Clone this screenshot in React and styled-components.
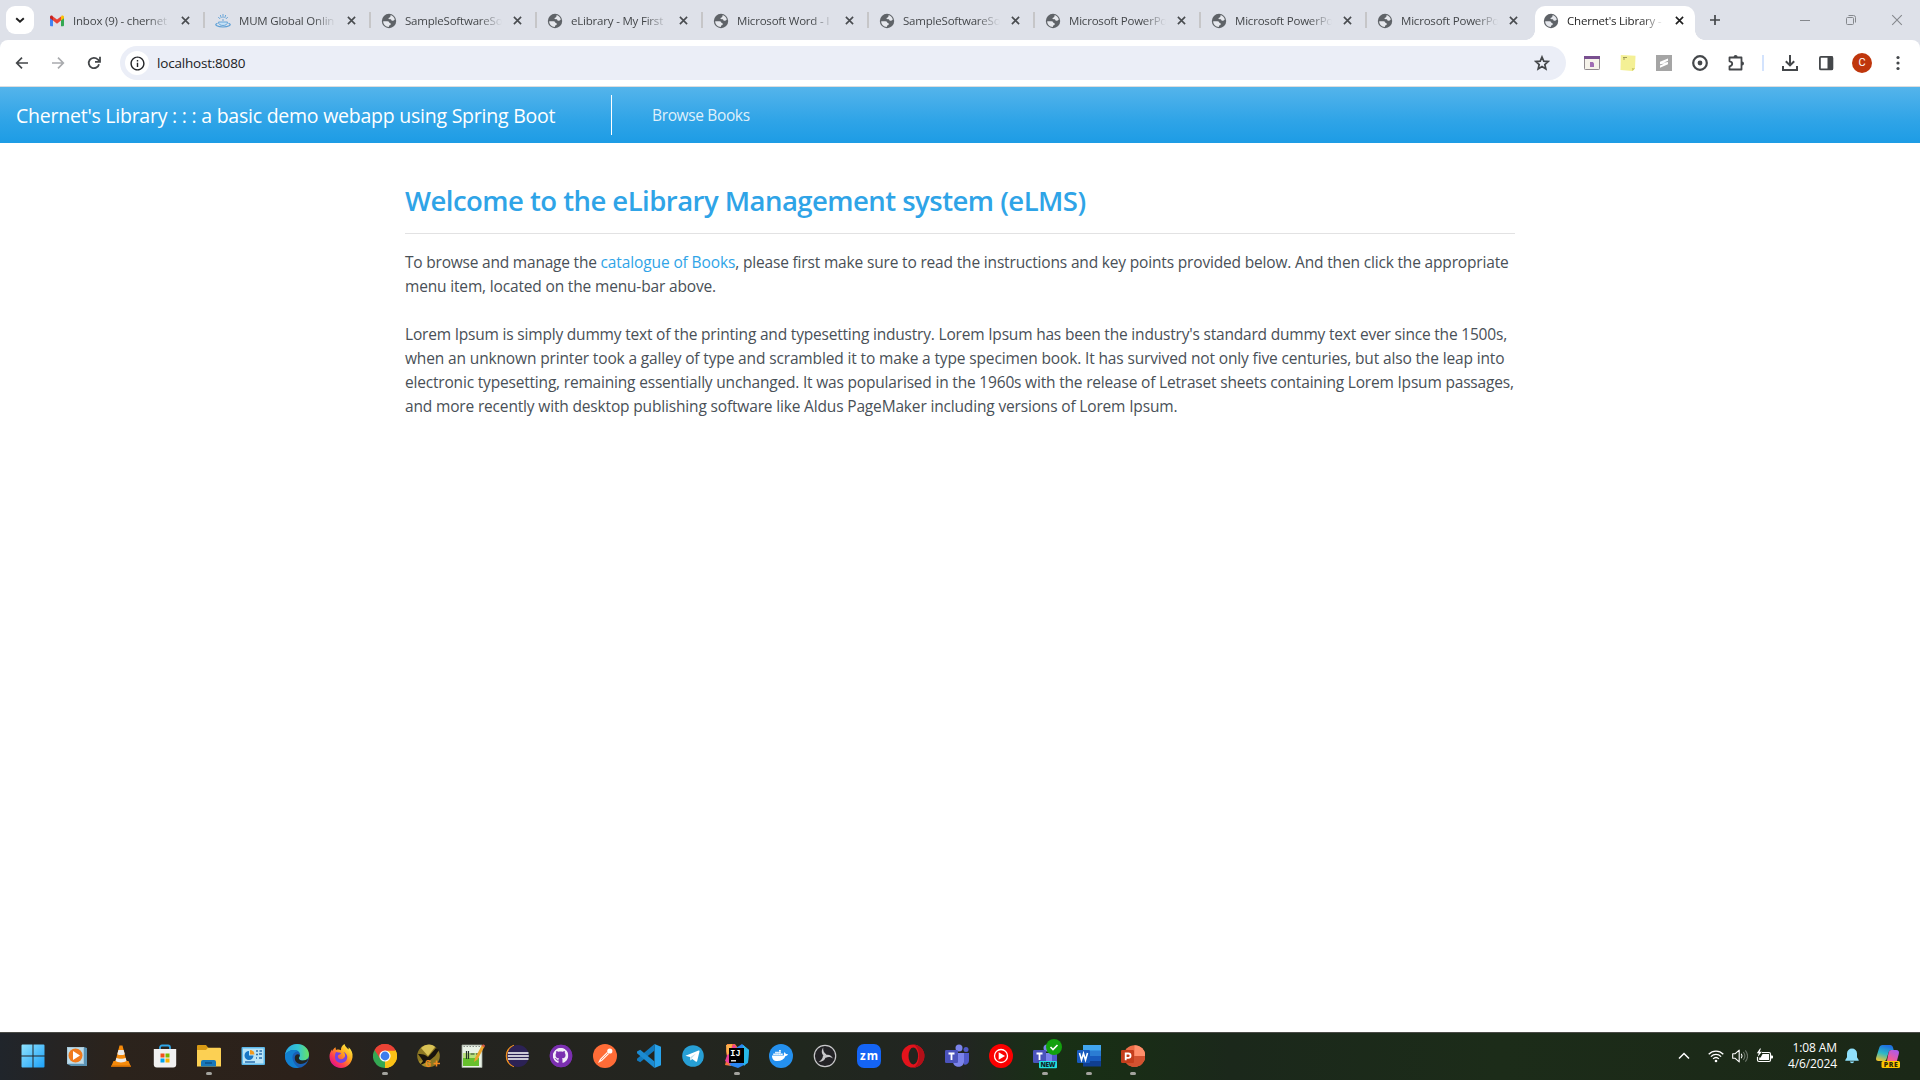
import React from 'react';
import styled, { createGlobalStyle, css } from 'styled-components';
import { MdInfoOutline } from 'react-icons/md';
import { FaGithub, FaDocker } from 'react-icons/fa';

const GlobalStyle = createGlobalStyle`
  * { box-sizing: border-box; }
  body { margin: 0; background: #fff; font-family: "Open Sans", "Noto Sans", sans-serif; }
  svg { display: block; flex: none; }
`;

const Screen = styled.div`
  width: 1920px;
  height: 1080px;
  display: flex;
  flex-direction: column;
  overflow: hidden;
`;

/* ---------- browser tabs ---------- */
const TabStrip = styled.div`
  height: 40px;
  flex: none;
  display: flex;
  background: #dee1e9;
`;
const TabSearch = styled.button`
  width: 28px;
  height: 28px;
  margin: 6px 4px 6px 6px;
  padding: 0;
  border: 0;
  border-radius: 9px;
  background: #fff;
  display: flex;
  align-items: center;
  justify-content: center;
`;
const Tab = styled.div`
  width: 166px;
  height: 40px;
  padding: 1px 0 0 11px;
  display: flex;
  align-items: center;
  position: relative;
  color: #44474a;
  ${p => p.$divided && css`
    &::after {
      content: '';
      position: absolute;
      right: -1px;
      top: 12px;
      width: 2px;
      height: 16px;
      background: #c6c6c8;
    }
  `}
  ${p => p.$active && css`
    width: 160px;
    height: 34px;
    margin: 6px 0 0 3px;
    padding: 0 0 5px 8px;
    background: #fff;
    border-radius: 10px 10px 0 0;
    color: #1f1f1f;
    &::before, &::after {
      content: '';
      position: absolute;
      bottom: 0;
      width: 10px;
      height: 10px;
    }
    &::before {
      left: -10px;
      background: radial-gradient(circle at 0 0, transparent 9.6px, #fff 10.2px);
    }
    &::after {
      right: -10px;
      background: radial-gradient(circle at 100% 0, transparent 9.6px, #fff 10.2px);
    }
  `}
`;
const Favicon = styled.span`
  width: 16px;
  height: 16px;
  margin-right: 8px;
  display: flex;
  align-items: center;
  justify-content: center;
  color: #5f6368;
`;
const TabTitle = styled.span`
  width: 97px;
  overflow: hidden;
  white-space: nowrap;
  font-size: 11.5px;
  line-height: 18px;
  letter-spacing: -0.2px;
  mask-image: linear-gradient(90deg, #000 74px, transparent 97px);
`;
const TabClose = styled.span`
  margin-left: 10.5px;
  color: ${p => (p.$active ? '#1f1f1f' : '#494c50')};
`;
const NewTab = styled.span`
  margin: 14px 0 0 14px;
  color: #44474a;
`;
const WindowButtons = styled.div`
  margin-left: auto;
  height: 40px;
  display: flex;
  align-items: center;
  color: #85888d;
`;
const WindowButton = styled.span`
  width: 46px;
  display: flex;
  justify-content: center;
`;

/* ---------- browser toolbar ---------- */
const ToolbarBack = styled.div`
  flex: none;
  background: #dee1e9;
`;
const Toolbar = styled.div`
  height: 47px;
  display: flex;
  align-items: center;
  padding: 0 4px;
  background: #fff;
  border-bottom: 1px solid #dcdddf;
  border-radius: 8px 8px 0 0;
`;
const ToolButton = styled.span`
  width: 36px;
  height: 36px;
  display: flex;
  align-items: center;
  justify-content: center;
  color: ${p => (p.$muted ? '#a9abae' : '#44474a')};
`;
const AddressBar = styled.div`
  width: 1446px;
  height: 34px;
  margin: 0 8px 0 8px;
  padding: 0 16px 0 5px;
  display: flex;
  align-items: center;
  border-radius: 17px;
  background: #ebeef7;
`;
const SiteInfo = styled.span`
  width: 24px;
  height: 24px;
  border-radius: 50%;
  background: #fff;
  display: flex;
  align-items: center;
  justify-content: center;
  color: #222427;
`;
const Url = styled.span`
  margin-left: 8px;
  flex: 1;
  font-size: 13.5px;
  letter-spacing: -0.2px;
  color: #202124;
`;
const ToolDivider = styled.span`
  width: 2px;
  height: 16px;
  margin: 0 8px;
  background: #d3e3fd;
`;
const Avatar = styled.span`
  width: 20px;
  height: 20px;
  border-radius: 50%;
  background: #bf360c;
  color: #fff;
  font: 11px/20px Roboto, sans-serif;
  text-align: center;
`;

/* ---------- web page ---------- */
const NavBar = styled.header`
  height: 56px;
  flex: none;
  padding-left: 16px;
  display: flex;
  align-items: center;
  background: linear-gradient(#54b4eb, #2fa4e7 60%, #1d9ce5);
  color: #fff;
`;
const Brand = styled.a`
  width: 595px;
  font-size: 19.5px;
  letter-spacing: -0.235px;
  white-space: nowrap;
`;
const NavDivider = styled.span`
  width: 1px;
  height: 40px;
  background: #fff;
`;
const NavLink = styled.a`
  margin-left: 40px;
  font-size: 15.5px;
  letter-spacing: -0.36px;
  color: rgba(255, 255, 255, 0.85);
`;
const Page = styled.main`
  flex: 1;
  padding: 41px 0 0 405px;
`;
const Content = styled.section`
  width: 1110px;
`;
const Heading = styled.h2`
  margin: 0;
  height: 34px;
  line-height: 34px;
  font-size: 27.5px;
  font-weight: 600;
  letter-spacing: -0.53px;
  color: #2fa4e7;
`;
const Rule = styled.hr`
  margin: 15px 0 16px;
  border: 0;
  height: 1px;
  background: #e2e2e3;
`;
const Paragraph = styled.p`
  margin: 0 0 24px;
  color: #495057;
  font-size: 15.5px;
  line-height: 24px;
`;
const Line = styled.span`
  display: block;
  white-space: pre;
  letter-spacing: ${p => p.$track}px;
`;
const Run = styled.span`
  letter-spacing: ${p => p.$track}px;
`;
const BookLink = styled.a`
  color: #2fa4e7;
  letter-spacing: -0.12px;
`;

/* ---------- taskbar ---------- */
const Taskbar = styled.footer`
  height: 48px;
  flex: none;
  padding: 0 11px 1px;
  display: flex;
  align-items: center;
  border-top: 1px solid #4a4b47;
  background: linear-gradient(90deg, #20252b 0, #2b231c 110px, #2c211a 300px, #24231f 400px,
    #23251f 700px, #20271e 800px, #222522 960px, #183015 1050px, #192d16 1130px, #1b281b 1230px, #1c2c19 1500px, #1b2817 1920px);
`;
const AppSlot = styled.span`
  width: 44px;
  height: 46px;
  display: flex;
  align-items: center;
  justify-content: center;
  position: relative;
  ${p => p.$running && css`
    &::after {
      content: '';
      position: absolute;
      bottom: 4px;
      left: 19px;
      width: 6px;
      height: 3px;
      border-radius: 2px;
      background: #a3a39e;
    }
  `}
`;
const Tray = styled.div`
  margin-left: auto;
  display: flex;
  align-items: center;
  color: #fff;
`;
const TraySlot = styled.span`
  width: ${p => p.$w}px;
  display: flex;
  justify-content: center;
`;
const Clock = styled.div`
  width: 61px;
  text-align: right;
  font-size: 12px;
  line-height: 16px;
  letter-spacing: -0.12px;
  white-space: nowrap;
`;

const Icon = ({ size = 24, box = 24, children, ...rest }) => (
  <svg width={size} height={size} viewBox={`0 0 ${box} ${box}`} fill="none" {...rest}>{children}</svg>
);

const GlobeIcon = () => (
  <Icon size={16} box={16}>
    <circle cx="8" cy="8" r="7.200" fill="#5f6368" />
    <path d="M9.600 2.100c2.200.6 3.800 2.300 4.200 4.500-.6.900-1.500 1.300-2.600 1.200-.9 0-1-.8-1.200-1.500-.8 0-1.900 0-2.400-.5-.5-.6.2-1.300 1-1.400.8-.2 1.100-1.200 1-2.300Z" fill="#e6e8ed" />
    <path d="M2.200 8.300h4.300c1.300 0 1.900.8 1.900 1.700 1.200 0 1.600.7 1.300 1.500-.3.700-1.500.7-1.700 1.400l-.2 1C5 14 2.100 11.600 2.200 8.300Z" fill="#e6e8ed" />
  </Icon>
);
const GmailIcon = () => (
  <Icon size={16} box={16}>
    <path d="M1 4v8.200a1 1 0 0 0 1 1h2V6.8Z" fill="#4285f4" />
    <path d="M15 4v8.200a1 1 0 0 1-1 1h-2V6.8Z" fill="#34a853" />
    <path d="M12 4.2V7.6L15 5.2V4c0-1.5-1.6-1.9-2.6-1.2Z" fill="#fbbc04" />
    <path d="M4 7.6V3.6L8 6.6l4-3v4l-4 3.1Z" fill="#ea4335" />
    <path d="M1 4v1.2l3 2.4V3.6l-.6-.8C2.400 2.100 1 2.600 1 4Z" fill="#c5221f" />
  </Icon>
);
const SakaiIcon = () => (
  <Icon size={16} box={16} stroke="#5c9fd6">
    <path d="M3.500 9c0 2.500 2 3.500 4.500 3.500s4.500-1 4.500-3.500Z" fill="#c4e0f6" strokeWidth=".9" />
    <path d="M2.500 10.300C.5 11 .3 12 1.800 12.800c3 1.600 9.400 1.600 12.400 0 1.500-.8 1.300-1.800-.7-2.500" strokeWidth="1.200" />
    <path d="M8 1v4M5.300 2l1 3M10.700 2l-1 3M3.200 4l2 2M12.800 4l-2 2M7 7h2" strokeWidth=".9" />
  </Icon>
);
const Cross = ({ size = 9, w = 1.8 }) => (
  <Icon size={size} box={10} stroke="currentColor" strokeWidth={w}><path d="m1 1 8 8M9 1 1 9" /></Icon>
);

/* ---------- application icons ---------- */
const Windows = () => (
  <Icon>
    <defs><linearGradient id="win" x1="0" y1="0" x2="1" y2="1"><stop stopColor="#8fe3ff" /><stop offset="1" stopColor="#1ca0f7" /></linearGradient></defs>
    <path fill="url(#win)" d="M.5 1.500a1 1 0 0 1 1-1h10v11H.5ZM12.500.5h10a1 1 0 0 1 1 1v10h-11ZM.5 12.500h11v11h-10a1 1 0 0 1-1-1ZM12.500 12.500h11v10a1 1 0 0 1-1 1h-10Z" />
  </Icon>
);
const MediaPlayer = () => (
  <Icon>
    <path d="M2 3h17v17H2Z" fill="#a9c9da" /><path d="m19 3 3 1v18l-3-2ZM2 20h17l3 2H6Z" fill="#5a93b5" />
    <path d="M3 4h15v15H3Z" fill="#bddcea" />
    <circle cx="10.500" cy="11.500" r="7" fill="#f07a1c" /><path d="m8 7 7 4.500L8 16Z" fill="#fff" />
  </Icon>
);
const Vlc = () => (
  <Icon>
    <path d="M4.500 17h15l2.500 6H2Z" fill="#f58a0b" /><path d="M2 21.500h20V23H2Z" fill="#c96a05" />
    <path d="M10.500 1.500h3L18 19c-2 2-10 2-12 0Z" fill="#f58a0b" />
    <path d="m9.400 6 5.300-.1 1.100 4.300c-2 1.200-5.500 1.200-7.500 0ZM7.400 13.700c2 1.400 7.200 1.400 9.200 0l.9 3.400c-2.500 1.700-8.500 1.700-11 0Z" fill="#ececec" />
  </Icon>
);
const Store = () => (
  <Icon>
    <path d="M7 6V3.500A2 2 0 0 1 9 1.500h6a2 2 0 0 1 2 2V6" stroke="#2fa6e9" strokeWidth="1.800" />
    <path d="M.8 5h22.400v15.500a3 3 0 0 1-3 3H3.800a3 3 0 0 1-3-3Z" fill="#f1f1f1" />
    <path d="M7.500 9.500h4v4h-4Z" fill="#f1511b" /><path d="M12.500 9.500h4v4h-4Z" fill="#80b900" />
    <path d="M7.500 14.500h4v4h-4Z" fill="#00a4ef" /><path d="M12.500 14.500h4v4h-4Z" fill="#fbb300" />
  </Icon>
);
const Explorer = () => (
  <Icon>
    <path d="M0 2a1 1 0 0 1 1-1h8l2.500 3H23v6H0Z" fill="#d99a14" />
    <path d="M0 6h9l2-2.200h12a1 1 0 0 1 1 1V22.500H0Z" fill="#fcd053" />
    <path d="M4 22.500V18a2 2 0 0 1 2-2h11a2 2 0 0 1 2 2v4.500Z" fill="#1878ba" /><path d="M8 19h7" stroke="#0c4f85" strokeWidth="1.500" />
  </Icon>
);
const ControlPanel = () => (
  <Icon>
    <rect x=".5" y="3" width="23.500" height="18" rx="1" fill="#5cb8ea" /><rect x="2" y="4.500" width="20.500" height="15" fill="#b9e4f8" />
    <path d="M8 7a4.500 4.500 0 1 0 4.500 4.500H8Z" fill="#1876c5" /><path d="M9 6v4.500h4.500A4.500 4.500 0 0 0 9 6Z" fill="#f29a1f" />
    <path d="M15 7h2M18.500 7H21M15 10.500h2M18 10h3M15 14h1M18 14h3M4 18h10" stroke="#2b6fae" strokeWidth="1.300" />
  </Icon>
);
const Edge = () => (
  <Icon>
    <defs><linearGradient id="edg" x1="0" y1=".3" x2="1" y2=".3"><stop stopColor="#2aa8e0" /><stop offset=".55" stopColor="#34c5d2" /><stop offset="1" stopColor="#69e35f" /></linearGradient></defs>
    <circle cx="12" cy="12" r="12" fill="#1a5fb4" />
    <path d="M0 11C.8 4.500 6 0 12 0c7 0 12 5 12 10.500 0 4-3 6-6 6-3.500 0-4.500-1.500-4-3 .5-1 1-1.500 1-3C15 8 12.500 6 9 6 5 6 1.500 8 0 11Z" fill="url(#edg)" />
    <path d="M0 11c1.500-3 5-5 9-5 1.500 0 3 .4 4 1.200C9 7.800 7 10.500 7.500 14c.6 4.500 3.500 8 6.500 9.800C6 25-.7 19 0 11Z" fill="#1280d0" />
    <path d="M14 13.500c-.5 1.500.5 3 4 3 2 0 3.500-.6 4.800-1.700L22.500 17c-2 2-4.500 3-7 3-4 0-6.500-4-5.500-7.500.7-2 3-3 4.700-1.500.2 1-.3 1.700-.7 2.500Z" fill="#222420" />
  </Icon>
);
const Firefox = () => (
  <Icon>
    <defs><linearGradient id="ffx" x1=".9" y1=".1" x2=".2" y2=".9"><stop stopColor="#fff044" /><stop offset=".4" stopColor="#ffa41c" /><stop offset=".75" stopColor="#ff3f4e" /><stop offset="1" stopColor="#e31587" /></linearGradient></defs>
    <path d="M15.500 0c.6 2.700 2.500 3.600 4 5.600.3-.8.2-1.600.1-2.400 3 2.600 4.400 6 3.900 10C22.700 19.500 17.800 24 12 24 5.500 24 .5 19 .5 12.600c0-3 1-5 2.600-7.300l.3 2C4 5.600 5 4 6.500 3.300L7 6c2-.8 3.500-.5 5 .2C11.800 3.500 13 1.500 15.500 0Z" fill="url(#ffx)" />
    <path d="M7 8c1.500.5 3 .2 4.500 1 1 .5.500 1-1 1.400-1.400.4-2 1.500-1.500 3 .8 2 4 2.600 6 .7 1.800-1.800 1.500-4-.5-6 3.500 1.300 5 5.300 2.700 8.500-2.500 3.400-8 3.200-10.200 0C5.600 14.500 5.500 10.500 7 8Z" fill="#7543e3" />
  </Icon>
);
const Chrome = () => (
  <Icon>
    <path d="M12 12 1.600 6A12 12 0 0 1 22.400 6Z" fill="#ea4335" />
    <path d="M12 12 22.400 6A12 12 0 0 1 12 24Z" fill="#fbc116" />
    <path d="M12 12v12A12 12 0 0 1 1.600 6Z" fill="#34a853" />
    <path d="M12 6.500h10.600A12 12 0 0 1 12 24l4.800-9.300Z" fill="#fbc116" /><path d="M1.600 6A12 12 0 0 1 22.600 6.500H12L7.200 14.700Z" fill="#ea4335" />
    <circle cx="12" cy="12" r="5.600" fill="#fff" /><circle cx="12" cy="12" r="4.400" fill="#3b7ded" />
  </Icon>
);
const Beekeeper = () => (
  <Icon>
    <circle cx="11.500" cy="12" r="11.300" fill="#8c7723" /><path d="M4 4C9-1 16 0 18 3l-7 9Z" fill="#d9c256" /><path d="M2 17c2 5 8 6 10 6l2-8Z" fill="#a8912f" />
    <path d="M1 10c3 0 5 0 7 1l3 2 8-9 3 2-4 6-6 5c-3 1-5 3-9 4l3-4-2-3Z" fill="#17130d" />
    <text x="8" y="23" fontSize="8.500" fontWeight="700" fontFamily="Roboto, sans-serif" fill="#f58a1f">G</text>
    <path d="M19.500 16.500v6M16.500 19.500h6.500" stroke="#f58a1f" strokeWidth="1.500" />
  </Icon>
);
const NotepadPlus = () => (
  <Icon>
    <path d="M1 1h20v22.500H1Z" fill="#e9f2e6" stroke="#9da39b" strokeWidth=".8" /><path d="M2 9h16v13H2Z" fill="#b9e07c" /><path d="M2 14h16v8H2Z" fill="#67bf2d" />
    <path d="M2.500 2.500h17" stroke="#8a918a" strokeDasharray="1.500 1.500" /><path d="M5.500 7v8M7.500 7v8M9.500 10h4M15 10h2" stroke="#26362a" strokeWidth="1.200" />
    <path d="m13 18 1-4 7-13 2.500 1.500-7 13Z" fill="#eda52c" /><path d="m20.500 1.800 2.800 1.700L24 1.200 22 .2Z" fill="#d25945" />
  </Icon>
);
const Eclipse = () => (
  <Icon>
    <path d="M9 1.200A11.400 11.400 0 0 0 9 22.800 13 13 0 0 1 9 1.200Z" fill="#f7941e" stroke="#f7941e" />
    <circle cx="13" cy="12" r="11" fill="#2c2255" /><path d="M3 9h20.500M2.800 12h21M3 15h20.500" stroke="#fff" strokeWidth="1.600" />
  </Icon>
);
const Github = () => (
  <Icon>
    <circle cx="12" cy="12" r="11.200" fill="#7b2fb0" />
    <FaGithub x="3.500" y="3.500" width="17" height="17" color="#f2edf7" />
    <circle cx="12" cy="12" r="9.800" stroke="#7b2fb0" strokeWidth="3" />
  </Icon>
);
const Postman = () => (
  <Icon>
    <circle cx="12" cy="12" r="12" fill="#ff6c37" />
    <path d="m5 19 2-4 7-7 2 2-7 7Z" fill="#fff" opacity=".92" /><circle cx="16.800" cy="7" r="2.600" fill="#fff" /><path d="m8 16 7-7" stroke="#ff6c37" strokeWidth=".7" />
  </Icon>
);
const VsCode = () => (
  <Icon>
    <path d="M17.500 0 24 2.800v18.400L17.500 24Z" fill="#27a3ec" />
    <path d="M17.500 0v6.500L3.200 18.200 0 16.500v-1.800Z" fill="#1279bd" /><path d="M17.500 24v-6.500L3.200 5.800 0 7.500v1.800Z" fill="#1b8bd2" />
  </Icon>
);
const Telegram = () => (
  <Icon>
    <circle cx="12" cy="12" r="10.800" fill="#279fd5" />
    <path d="m4.500 11.800 13-5.300c.8-.2 1.100.3 1 1L16.200 17c-.2.800-.8.900-1.500.5l-3.500-2.600-1.800 1.700-.4-3.500-3.800-1Z" fill="#fff" /><path d="m9.200 13.200 6-4-4.500 5-.5 2Z" fill="#c0dfed" />
  </Icon>
);
const IntelliJ = () => (
  <Icon>
    <path d="M2 0h8l3 4L6 22l-6-1 2-8-1-6Z" fill="#f7733b" /><path d="M9 0 3 9 0 17l6 4 8-12Z" fill="#ec3f9a" /><path d="m1 1 6-1-1 9-4 2Z" fill="#fcb14c" />
    <path d="m11 4 6-4 7 6-1 13-10 5-9-3 6-6Z" fill="#2a86f3" /><path d="m18 1 6 5-1 12-4 4-2-10Z" fill="#27b7e8" />
    <path d="M4 4h15v15H4Z" fill="#000" />
    <text x="5.300" y="12.200" fontSize="8.500" fontWeight="700" fontFamily="Liberation Mono, monospace" fill="#fff">IJ</text><path d="M6 16.800h5" stroke="#fff" strokeWidth="1.300" />
  </Icon>
);
const Docker = () => (
  <Icon><circle cx="12" cy="12" r="12" fill="#2490ee" /><FaDocker x="3" y="3.500" width="18" height="17" color="#fff" /></Icon>
);
const Obs = () => (
  <Icon>
    <circle cx="12" cy="12" r="10.700" fill="#232326" stroke="#c8c8ca" strokeWidth="1.200" />
    {[0, 120, 240].map(turn => (
      <path key={turn} transform={`rotate(${turn} 12 12)`} d="M12 12.600C8.800 11 7.600 7.500 10.200 3.600 9.900 7 11 9 13.600 10.600Z" fill="#c8c8ca" />
    ))}
  </Icon>
);
const Zoom = () => (
  <Icon><rect width="24" height="24" rx="7" fill="#1464f5" /><text x="12" y="15.800" textAnchor="middle" textLength="18" fontSize="11.500" fontWeight="700" fontFamily="Open Sans, sans-serif" fill="#fff">zm</text></Icon>
);
const Opera = () => (
  <Icon>
    <ellipse cx="12" cy="12" rx="11.300" ry="11.500" fill="#e3131c" /><path d="M12 .5A11.500 11.500 0 0 1 12 23.500c8-2 8-21 0-23Z" fill="#b30f18" />
    <ellipse cx="12.300" cy="12" rx="4.800" ry="8.500" fill="#22251f" />
  </Icon>
);
const TeamsShape = () => (
  <>
    <circle cx="14" cy="4" r="3.500" fill="#7b83eb" /><circle cx="21" cy="5.500" r="2.500" fill="#5059c9" />
    <path d="M17 9h7v7.500a4 4 0 0 1-5 4Z" fill="#5059c9" /><path d="M8 9h11v8.500c0 7-11 7-11 0Z" fill="#7b83eb" />
    <rect y="6" width="13" height="13" rx="1.200" fill="#4b53bc" /><path d="M3.500 9.500h6M6.500 9.500V16" stroke="#fff" strokeWidth="1.800" />
  </>
);
const Teams = () => <Icon><TeamsShape /></Icon>;
const YtMusic = () => (
  <Icon><circle cx="12" cy="12" r="12" fill="#fb0000" /><circle cx="12" cy="12" r="6.500" stroke="#fff" strokeWidth="1.300" /><path d="m9.700 8.300 6.300 3.700-6.300 3.700Z" fill="#fff" /></Icon>
);
const TeamsNew = () => (
  <Icon overflow="visible">
    <TeamsShape />
    <rect x="6" y="17" width="18" height="7.200" rx="1" fill="#21e0e0" />
    <text x="15" y="23" textAnchor="middle" textLength="15" fontSize="6.500" fontWeight="900" fontFamily="Open Sans, sans-serif" fill="#10272b">NEW</text>
    <circle cx="21" cy="3" r="8" fill="#13a10e" /><path d="m17.500 3 2.500 2.500 4.500-4.500" stroke="#fff" strokeWidth="1.600" />
  </Icon>
);
const Word = () => (
  <Icon>
    <path d="M6 1h18v6H6Z" fill="#41a5ee" /><path d="M6 6.500h18V12H6Z" fill="#2b7cd3" /><path d="M6 12h18v5.500H6Z" fill="#185abd" /><path d="M6 17h18v5.500H6Z" fill="#103f91" />
    <rect y="6" width="13" height="13" rx="1.200" fill="#185abd" />
    <path d="m2.500 9 2 7 2-6.500L8.500 16l2-7" stroke="#fff" strokeWidth="1.600" />
  </Icon>
);
const PowerPoint = () => (
  <Icon>
    <circle cx="13.500" cy="12" r="10.800" fill="#ed6c47" /><path d="M13.500 1.200A10.800 10.800 0 0 1 24.300 12H13.500Z" fill="#ff8f6b" /><path d="M2.700 12h21.600a10.800 10.800 0 0 1-21.600 0Z" fill="#d35230" />
    <rect y="6" width="13" height="13" rx="1.200" fill="#c43e1c" /><path d="M4.700 16.200V9.500h2.600c3 0 3 4.300 0 4.300H5" stroke="#fff" strokeWidth="1.800" />
  </Icon>
);

const TABS = [
  { title: 'Inbox (9) - chernet', icon: GmailIcon },
  { title: 'MUM Global Onlin', icon: SakaiIcon },
  { title: 'SampleSoftwareSo' },
  { title: 'eLibrary - My First' },
  { title: 'Microsoft Word - I' },
  { title: 'SampleSoftwareSo' },
  { title: 'Microsoft PowerPo' },
  { title: 'Microsoft PowerPo' },
  { title: 'Microsoft PowerPo' },
  { title: "Chernet's Library -", active: true },
];

const APPS = [
  [Windows], [MediaPlayer], [Vlc], [Store], [Explorer, true], [ControlPanel], [Edge], [Firefox],
  [Chrome, true], [Beekeeper], [NotepadPlus], [Eclipse], [Github], [Postman], [VsCode], [Telegram],
  [IntelliJ, true], [Docker], [Obs], [Zoom], [Opera], [Teams], [YtMusic], [TeamsNew, true], [Word, true], [PowerPoint, true],
];

function Tabs() {
  return (
    <TabStrip>
      <TabSearch><Icon size={10} box={10} stroke="#1f1f1f" strokeWidth="1.900"><path d="m1.200 3.200 3.800 3.600 3.800-3.600" /></Icon></TabSearch>
      {TABS.map((tab, i) => {
        const Mark = tab.icon || GlobeIcon;
        return (
          <Tab key={i} $active={tab.active} $divided={i < 8}>
            <Favicon><Mark /></Favicon>
            <TabTitle>{tab.title}</TabTitle>
            <TabClose $active={tab.active}><Cross /></TabClose>
          </Tab>
        );
      })}
      <NewTab><Icon size={12} box={12} stroke="currentColor" strokeWidth="1.700"><path d="M6 1v10M1 6h10" /></Icon></NewTab>
      <WindowButtons>
        <WindowButton><Icon size={10} box={10} stroke="currentColor"><path d="M0 5.500h10" /></Icon></WindowButton>
        <WindowButton><Icon size={10} box={10} stroke="currentColor"><rect x=".5" y="2.500" width="7" height="7" rx="1" /><path d="M2.500.5h5a2 2 0 0 1 2 2v5" /></Icon></WindowButton>
        <WindowButton><Cross size={12} w={0.9} /></WindowButton>
      </WindowButtons>
    </TabStrip>
  );
}

function BrowserToolbar() {
  return (
    <ToolbarBack>
      <Toolbar>
        <ToolButton><Icon size={14} box={14} stroke="currentColor" strokeWidth="1.700"><path d="M13 7H2M7 1.700 1.700 7 7 12.300" /></Icon></ToolButton>
        <ToolButton $muted><Icon size={14} box={14} stroke="currentColor" strokeWidth="1.700"><path d="M1 7h11M7 1.700 12.300 7 7 12.300" /></Icon></ToolButton>
        <ToolButton><Icon size={14} box={14} stroke="currentColor" strokeWidth="1.800"><path d="M12 8.200A5.200 5.200 0 1 1 10.800 3.500L12.500 5.200" /><path d="M13 .8v5H8" /></Icon></ToolButton>
        <AddressBar>
          <SiteInfo><MdInfoOutline size={17} /></SiteInfo>
          <Url>localhost:8080</Url>
          <Icon size={16} box={16} stroke="#44474a" strokeWidth="1.700"><path d="m8 2 1.750 4.150 4.450.4-3.400 2.950 1.050 4.400L8 11.550 4.150 13.900l1.050-4.400L1.800 6.550l4.450-.4Z" /></Icon>
        </AddressBar>
        <ToolButton>
          <Icon size={16} box={16}><rect x=".5" y="1.500" width="15" height="13" rx=".8" fill="#f6f3ea" stroke="#918a8e" /><path d="M0 1h16v3H0Z" fill="#794f90" /><path d="M6 7h2.800L10 8.300v3.700H6Z" fill="#a06db3" /></Icon>
        </ToolButton>
        <ToolButton>
          <Icon size={16} box={16}><path d="M.8 0 15.500.8 15 13.500 12.500 16 .5 15Z" fill="#f4f095" /><path d="m15 13.500-3.200-.5.7 3Z" fill="#cfc965" /><path d="M3 2.500h4M3 4h2" stroke="#a09c58" /></Icon>
        </ToolButton>
        <ToolButton>
          <Icon size={16} box={16}><path d="M0 0h16v16H0Z" fill="#a5a5a5" /><path d="m4 6.800 8-3.300v2.300L7.500 7.700 12 7v2.300L4 12.700v-2.300L8.500 8.500 4 9.200Z" fill="#fff" /></Icon>
        </ToolButton>
        <ToolButton>
          <Icon size={16} box={16}><circle cx="8" cy="8" r="6.800" stroke="currentColor" strokeWidth="2.200" /><circle cx="8" cy="8" r="2.400" fill="currentColor" /></Icon>
        </ToolButton>
        <ToolButton>
          <Icon size={18} box={18}>
            <path d="M2.500 3.500h12v12h-12v-3.200c2.200-.3 2.700-1.300 2.700-2.500s-.5-2.200-2.700-2.500Z" stroke="currentColor" strokeWidth="1.800" strokeLinejoin="round" />
            <path d="M6.600 3a2 2 0 0 1 4 0ZM15 7.500a2 2 0 0 1 0 4Z" fill="currentColor" />
          </Icon>
        </ToolButton>
        <ToolDivider />
        <ToolButton><Icon size={16} box={16} stroke="currentColor" strokeWidth="2"><path d="M8 0v10M3.800 6.200 8 10.400l4.200-4.200M1 11v4h14v-4" /></Icon></ToolButton>
        <ToolButton><Icon size={16} box={16}><rect x="1.900" y="1.900" width="12.500" height="12.500" rx="1" stroke="currentColor" strokeWidth="1.800" /><path d="M9.500 1.500H15v13H9.500Z" fill="currentColor" /></Icon></ToolButton>
        <ToolButton><Avatar>C</Avatar></ToolButton>
        <ToolButton><Icon size={16} box={16}><g fill="currentColor"><circle cx="8" cy="2.500" r="1.600" /><circle cx="8" cy="8" r="1.600" /><circle cx="8" cy="13.500" r="1.600" /></g></Icon></ToolButton>
      </Toolbar>
    </ToolbarBack>
  );
}

function SystemTray() {
  return (
    <Tray>
      <TraySlot $w={40}><Icon size={12} box={12} stroke="currentColor" strokeWidth="1.500"><path d="m1 8.500 5-5 5 5" /></Icon></TraySlot>
      <TraySlot $w={24}>
        <Icon size={16} box={16} stroke="currentColor" strokeWidth="1.300">
          <path d="M.7 6.200c4-4.200 10.600-4.200 14.600 0M2.900 8.600c2.900-2.900 7.300-2.900 10.200 0M5.100 10.900c1.700-1.600 4.100-1.600 5.800 0" /><circle cx="8" cy="13" r="1.300" fill="currentColor" stroke="none" />
        </Icon>
      </TraySlot>
      <TraySlot $w={24}>
        <Icon size={16} box={16} stroke="currentColor" strokeWidth="1.100">
          <path d="M.7 5.700h2.500l4-3.600v11.800l-4-3.600H.7Z" strokeLinejoin="round" /><path d="M9.300 5.700c1 1.500 1 3.100 0 4.600" /><path d="M11.300 4c2 2.500 2 5.500 0 8M13.300 2.300c2.800 3.500 2.800 7.900 0 11.400" opacity=".35" />
        </Icon>
      </TraySlot>
      <TraySlot $w={24}>
        <Icon size={17} box={17}>
          <path d="M6 4.500h7a1.500 1.500 0 0 1 1.500 1.500v6a1.500 1.500 0 0 1-1.500 1.500H3A1.500 1.500 0 0 1 1.500 12V9" stroke="#fff" strokeWidth="1.200" />
          <path d="M6.500 6h6.500v6H3.200V9.500h1.500Z" fill="#fff" /><path d="M15 7.500h1.200a.8.800 0 0 1 .8.800v1.400a.8.800 0 0 1-.8.800H15ZM4 .5.8 5.300h2L1.500 9 6 3.800H3.600L5 .5Z" fill="#fff" />
        </Icon>
      </TraySlot>
      <Clock>1:08 AM<br />4/6/2024</Clock>
      <TraySlot $w={30}>
        <Icon size={16} box={16}><path d="M8 .5a5 5 0 0 0-5 5v3.800L1.300 12v.7h13.400V12L13 9.300V5.500a5 5 0 0 0-5-5ZM5.800 13.600a2.300 2.300 0 0 0 4.400 0Z" fill="#8fe0fb" /></Icon>
      </TraySlot>
      <TraySlot $w={42}>
        <Icon>
          <defs>
            <linearGradient id="cpa" x1=".5" y1="0" x2=".2" y2="1"><stop stopColor="#1f6fe0" /><stop offset=".5" stopColor="#2cb8c8" /><stop offset="1" stopColor="#f2c52c" /></linearGradient>
            <linearGradient id="cpb" x1=".8" y1="0" x2=".3" y2="1"><stop stopColor="#a75bf0" /><stop offset=".6" stopColor="#ee5a9b" /><stop offset="1" stopColor="#f98b4a" /></linearGradient>
          </defs>
          <path d="M6.500 1h7.500c1.800 0 2.500 1 3 2.500l.7 2.500h-2c-1.800 0-2.700 1-3.200 2.500l-2 6.500c-.4 1.500-1.300 2-2.700 2H2.500C.3 17-.3 15.500.2 13.500L3.300 3.500C3.800 2 4.800 1 6.500 1Z" fill="url(#cpa)" />
          <path d="M15.500 6H20c2.500 0 3.500 1.600 2.800 4l-2.600 9.500c-.5 1.800-1.700 2.500-3.500 2.500H10l2.500-13c.5-1.800 1.300-3 3-3Z" fill="url(#cpb)" />
          <rect x="5.500" y="17" width="18.500" height="7" rx="1.500" fill="#fdc500" />
          <text x="14.700" y="23" textAnchor="middle" textLength="14" fontSize="6.800" fontWeight="800" fontFamily="Open Sans, sans-serif" fill="#2b2508">PRE</text>
        </Icon>
      </TraySlot>
    </Tray>
  );
}

export default function App() {
  return (
    <Screen>
      <GlobalStyle />
      <Tabs />
      <BrowserToolbar />
      <NavBar>
        <Brand>Chernet's Library : : : a basic demo webapp using Spring Boot</Brand>
        <NavDivider />
        <NavLink>Browse Books</NavLink>
      </NavBar>
      <Page>
        <Content>
          <Heading>Welcome to the eLibrary Management system (eLMS)</Heading>
          <Rule />
          <Paragraph>
            <Line $track={-0.169}>
              <Run $track={-0.21}>To browse and manage the </Run>
              <BookLink>catalogue of Books</BookLink>
              , please first make sure to read the instructions and key points provided below. And then click the appropriate
            </Line>
            <Line $track={-0.165}>menu item, located on the menu-bar above.</Line>
          </Paragraph>
          <Paragraph>
            <Line $track={-0.193}>Lorem Ipsum is simply dummy text of the printing and typesetting industry. Lorem Ipsum has been the industry's standard dummy text ever since the 1500s,</Line>
            <Line $track={-0.142}>when an unknown printer took a galley of type and scrambled it to make a type specimen book. It has survived not only five centuries, but also the leap into</Line>
            <Line $track={-0.188}>electronic typesetting, remaining essentially unchanged. It was popularised in the 1960s with the release of Letraset sheets containing Lorem Ipsum passages,</Line>
            <Line $track={-0.163}>and more recently with desktop publishing software like Aldus PageMaker including versions of Lorem Ipsum.</Line>
          </Paragraph>
        </Content>
      </Page>
      <Taskbar>
        {APPS.map(([Mark, running], i) => (
          <AppSlot key={i} $running={running}><Mark /></AppSlot>
        ))}
        <SystemTray />
      </Taskbar>
    </Screen>
  );
}
